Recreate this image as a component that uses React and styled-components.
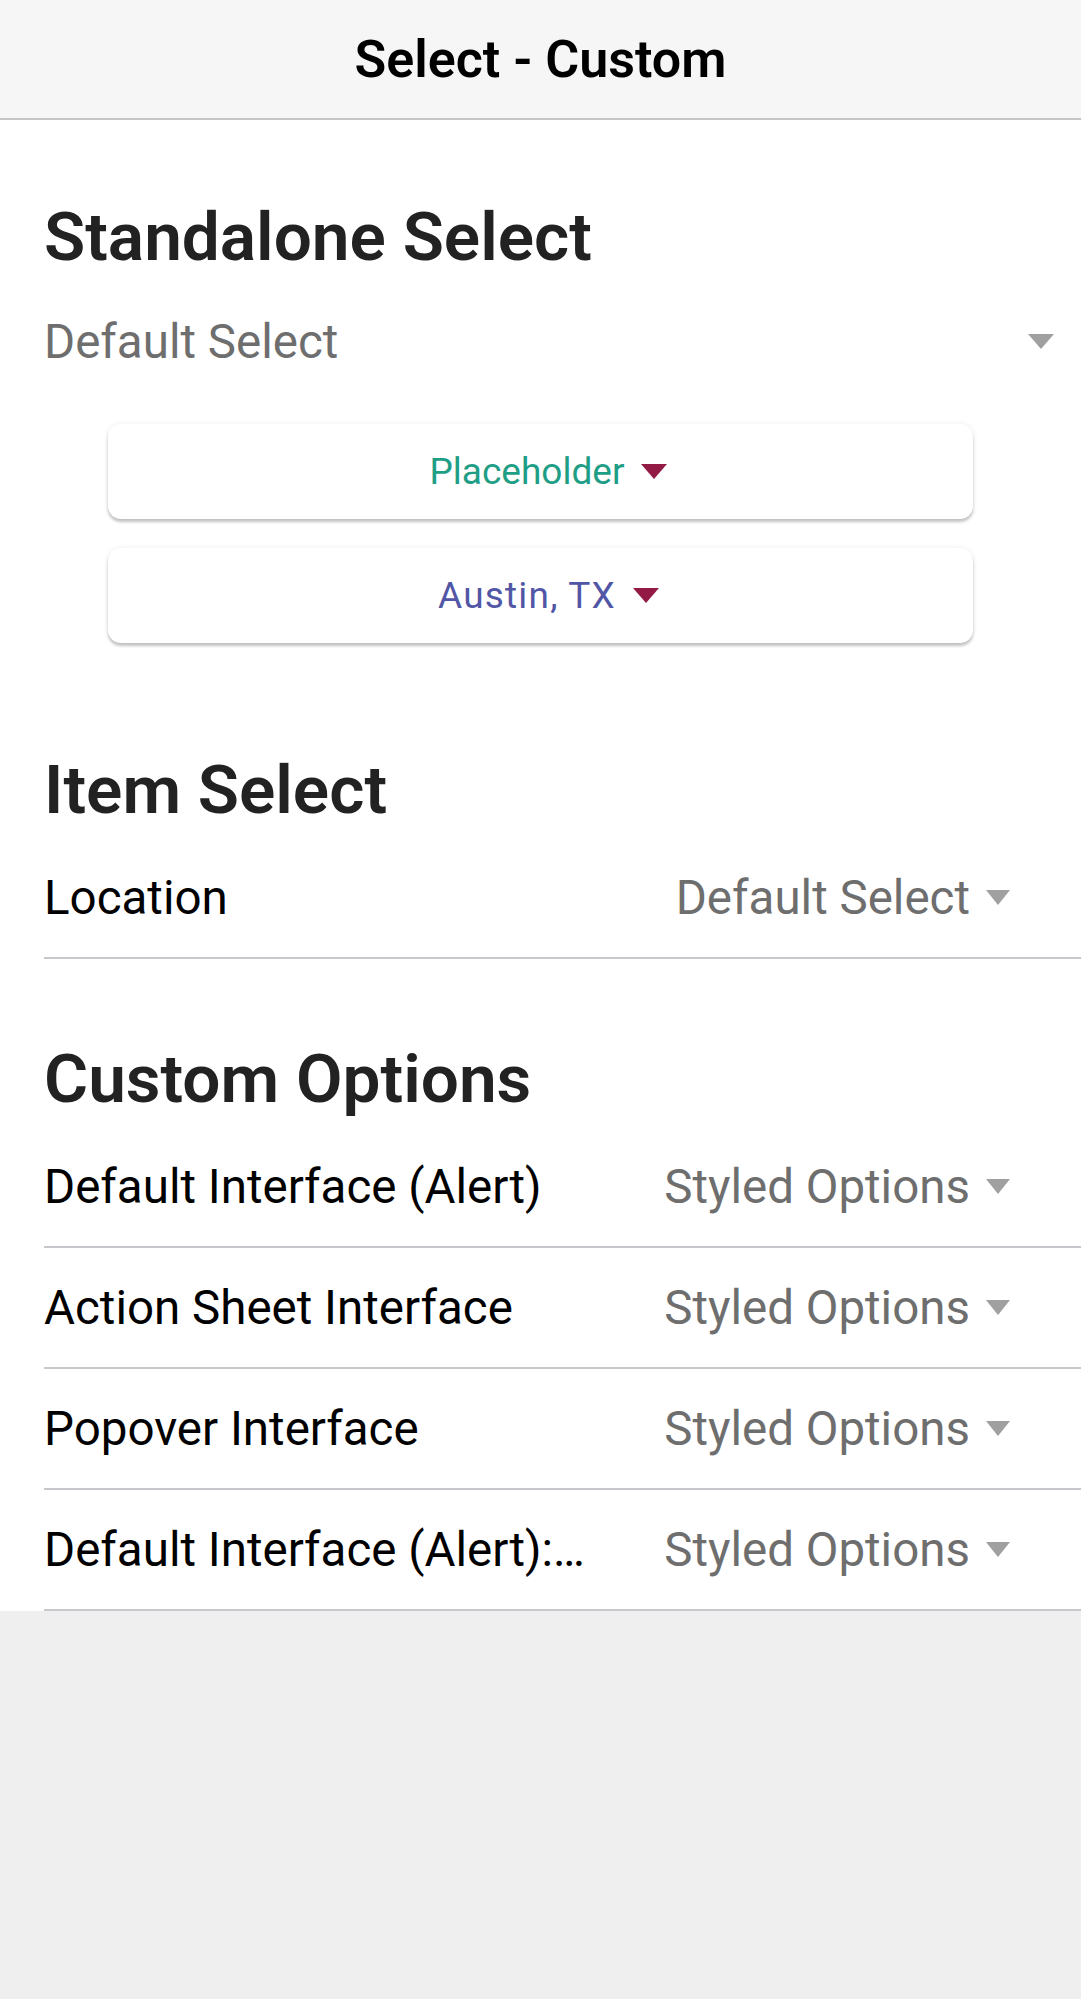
import React from "react";
import styled, { createGlobalStyle } from "styled-components";

const GlobalStyle = createGlobalStyle`
  html, body {
    margin: 0;
    padding: 0;
    background: #efefef;
    font-family: Roboto, "Noto Sans", "Liberation Sans", sans-serif;
    -webkit-font-smoothing: antialiased;
  }
  * { box-sizing: border-box; }
`;

const Header = styled.header`
  height: 120px;
  background: #f6f6f6;
  border-bottom: 2px solid #c6c6c6;
  display: flex;
  align-items: center;
  justify-content: center;
`;

const Title = styled.h1`
  margin: 0;
  font-size: 52px;
  font-weight: 600;
  color: #000;
`;

const Content = styled.main`
  background: #fff;
  display: flex;
  flex-direction: column;
`;

const Section = styled.section`
  padding-top: ${(p) => p.$top}px;
  display: flex;
  flex-direction: column;
`;

const Heading = styled.h2`
  margin: 0 0 ${(p) => p.$gap ?? 9}px;
  padding-left: 44px;
  font-size: 67.5px;
  line-height: 79px;
  font-weight: 600;
  color: #222;
`;

const StandaloneSelect = styled.div`
  height: 111px;
  display: flex;
  align-items: center;
  justify-content: space-between;
  padding: 0 27px 0 44px;
  font-size: 47.5px;
  color: #6e6e6e;
`;

const Arrow = styled.span`
  display: inline-block;
  flex-shrink: 0;
  width: 0;
  height: 0;
  border-left: ${(p) => p.$w / 2}px solid transparent;
  border-right: ${(p) => p.$w / 2}px solid transparent;
  border-top: ${(p) => p.$h}px solid ${(p) => p.$color};
`;

const Cards = styled.div`
  display: flex;
  flex-direction: column;
  gap: 29px;
  padding: 27px 108px 0;
`;

const Card = styled.div`
  height: 95px;
  border-radius: 13px;
  background: #fff;
  box-shadow: 0 3px 3px rgba(0, 0, 0, 0.22), 0 0 6px rgba(0, 0, 0, 0.07);
  display: flex;
  align-items: center;
  justify-content: center;
  gap: 17px;
  padding-left: 16px;
  font-size: 37px;
  letter-spacing: ${(p) => p.$spacing ?? 0}px;
  color: ${(p) => p.$color};
`;

const Row = styled.div`
  margin-left: 44px;
  height: 121px;
  border-bottom: 2px solid #c8c7cc;
  display: flex;
  align-items: center;
  padding-right: 71px;
  font-size: 47.5px;
`;

const Label = styled.span`
  flex: 1;
  min-width: 0;
  white-space: nowrap;
  overflow: hidden;
  text-overflow: ellipsis;
  color: #000;
`;

const Select = styled.span`
  flex-shrink: 0;
  display: flex;
  align-items: center;
  gap: 16px;
  margin-left: 76px;
  color: #6e6e6e;
`;

const Value = styled.span`
  white-space: nowrap;
`;

const rows = [
  "Default Interface (Alert)",
  "Action Sheet Interface",
  "Popover Interface",
  "Default Interface (Alert): Custom Styles",
];

export default function App() {
  return (
    <>
      <GlobalStyle />
      <Header>
        <Title>Select - Custom</Title>
      </Header>
      <Content>
        <Section $top={77}>
          <Heading $gap={10}>Standalone Select</Heading>
          <StandaloneSelect>
            <span>Default Select</span>
            <Arrow $w={26} $h={15} $color="#a0a0a0" />
          </StandaloneSelect>
          <Cards>
            <Card $color="#1f9e86">
              <span>Placeholder</span>
              <Arrow $w={27} $h={15} $color="#921a45" />
            </Card>
            <Card $color="#5256a6" $spacing={1.2}>
              <span>Austin, TX</span>
              <Arrow $w={27} $h={15} $color="#921a45" />
            </Card>
          </Cards>
        </Section>
        <Section $top={107}>
          <Heading>Item Select</Heading>
          <Row>
            <Label>Location</Label>
            <Select>
              <Value>Default Select</Value>
              <Arrow $w={25} $h={15} $color="#a0a0a0" />
            </Select>
          </Row>
        </Section>
        <Section $top={80}>
          <Heading>Custom Options</Heading>
          {rows.map((r) => (
            <Row key={r}>
              <Label>{r}</Label>
              <Select>
                <Value>Styled Options</Value>
                <Arrow $w={25} $h={15} $color="#a0a0a0" />
              </Select>
            </Row>
          ))}
        </Section>
      </Content>
    </>
  );
}
